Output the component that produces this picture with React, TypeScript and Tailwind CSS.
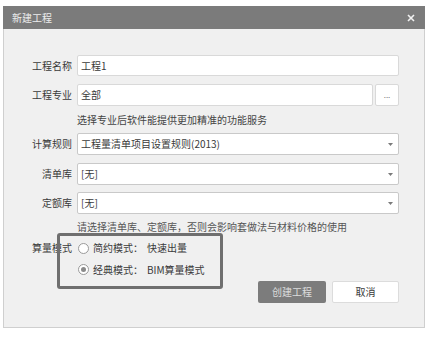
import React from "react";

const font = { fontFamily: '"Noto Sans CJK SC", "Noto Sans", sans-serif' };

function Arrow() {
  return (
    <svg width="5" height="3" viewBox="0 0 5 3" className="mr-[5px]">
      <path d="M0 0 L5 0 L2.5 3 Z" fill="#7a7a7a" />
    </svg>
  );
}

function Row({ label, children }: { label: string; children: React.ReactNode }) {
  return (
    <div className="flex items-center">
      <div className="w-[68px] shrink-0 text-right text-[10px] leading-none text-[#3a3a3a]">{label}</div>
      <div className="ml-[5px] flex flex-1 items-center">{children}</div>
    </div>
  );
}

function SelectBox({ text }: { text: string }) {
  return (
    <div className="flex h-[22px] flex-1 items-center justify-between rounded-[2px] border border-[#c9c9c9] bg-white">
      <span className="pl-[3px] text-[10px] leading-none text-[#3a3a3a]">{text}</span>
      <Arrow />
    </div>
  );
}

export default function App() {
  return (
    <div className="h-[338px] w-[432px] bg-white" style={font}>
      <div className="ml-[3px] w-[422px] pt-[6px]">
        <div className="flex h-[23px] items-center justify-between bg-[#7b7b7b] px-[9px]">
          <span className="text-[10px] leading-none text-[#ececec]">新建工程</span>
          <svg width="8" height="8" viewBox="0 0 8 8" className="mr-[1px]">
            <path d="M1 1 L7 7 M7 1 L1 7" stroke="#f2f2f2" strokeWidth="1.6" />
          </svg>
        </div>
        <div className="relative flex h-[299px] flex-col border-x border-b border-[#cfcfcf] bg-[#f0f0f0] pr-[25px] pt-[26px]">
          <Row label="工程名称">
            <div className="flex h-[21px] flex-1 items-center rounded-[2px] border border-[#d9d9d9] bg-white pl-[3px] text-[10px] leading-none text-[#3a3a3a]">
              工程1
            </div>
          </Row>
          <div className="mt-[8px]">
            <Row label="工程专业">
              <div className="flex h-[22px] flex-1 items-center rounded-[2px] border border-[#d9d9d9] bg-white pl-[3px] text-[10px] leading-none text-[#3a3a3a]">
                全部
              </div>
              <div className="ml-[2px] flex h-[22px] w-[24px] items-center justify-center rounded-[2px] border border-[#d9d9d9] bg-white pb-[1px] text-[8px] leading-none text-[#777]">
                ...
              </div>
            </Row>
          </div>
          <div className="ml-[73px] flex h-[27px] items-center text-[10px] leading-none text-[#444]">
            选择专业后软件能提供更加精准的功能服务
          </div>
          <Row label="计算规则">
            <SelectBox text="工程量清单项目设置规则(2013)" />
          </Row>
          <div className="mt-[8px]">
            <Row label="清单库">
              <SelectBox text="[无]" />
            </Row>
          </div>
          <div className="mt-[7px]">
            <Row label="定额库">
              <SelectBox text="[无]" />
            </Row>
          </div>
          <div className="ml-[73px] flex h-[26px] items-center text-[10px] leading-none text-[#555]">
            请选择清单库、定额库，否则会影响套做法与材料价格的使用
          </div>
          <div className="flex">
            <div className="mt-[-3px] flex flex-col">
              <div className="flex h-[22px] items-center">
                <div className="w-[68px] text-right text-[10px] leading-none text-[#3a3a3a]">算量模式</div>
                <div className="ml-[6px] h-[11px] w-[11px] rounded-full border border-[#9a9a9a] bg-white" />
                <span className="ml-[4px] text-[10px] leading-none text-[#3a3a3a]">简约模式：</span>
                <span className="ml-[4px] text-[10px] leading-none text-[#3a3a3a]">快速出量</span>
              </div>
              <div className="flex h-[21px] items-center">
                <div className="w-[68px]" />
                <div className="ml-[6px] flex h-[11px] w-[11px] items-center justify-center rounded-full border border-[#9a9a9a] bg-white">
                  <div className="h-[5px] w-[5px] rounded-full bg-[#8a8a8a]" />
                </div>
                <span className="ml-[4px] text-[10px] leading-none text-[#3a3a3a]">经典模式：</span>
                <span className="ml-[4px] text-[10px] leading-none text-[#3a3a3a]">BIM算量模式</span>
              </div>
            </div>
            <div className="ml-auto mt-[41px] flex gap-[6px]">
              <div className="flex h-[22px] w-[68px] items-center justify-center rounded-[2px] bg-[#7c7c7c] text-[10px] leading-none text-[#dcdcdc]">
                创建工程
              </div>
              <div className="flex h-[22px] w-[67px] items-center justify-center rounded-[2px] border border-[#dcdcdc] bg-white text-[10px] leading-none text-[#3a3a3a]">
                取消
              </div>
            </div>
          </div>
          <div className="pointer-events-none absolute left-[53px] top-[204px] h-[56px] w-[166px] rounded-[3px] border-[3px] border-[#6f6f6f]" />
        </div>
      </div>
    </div>
  );
}
